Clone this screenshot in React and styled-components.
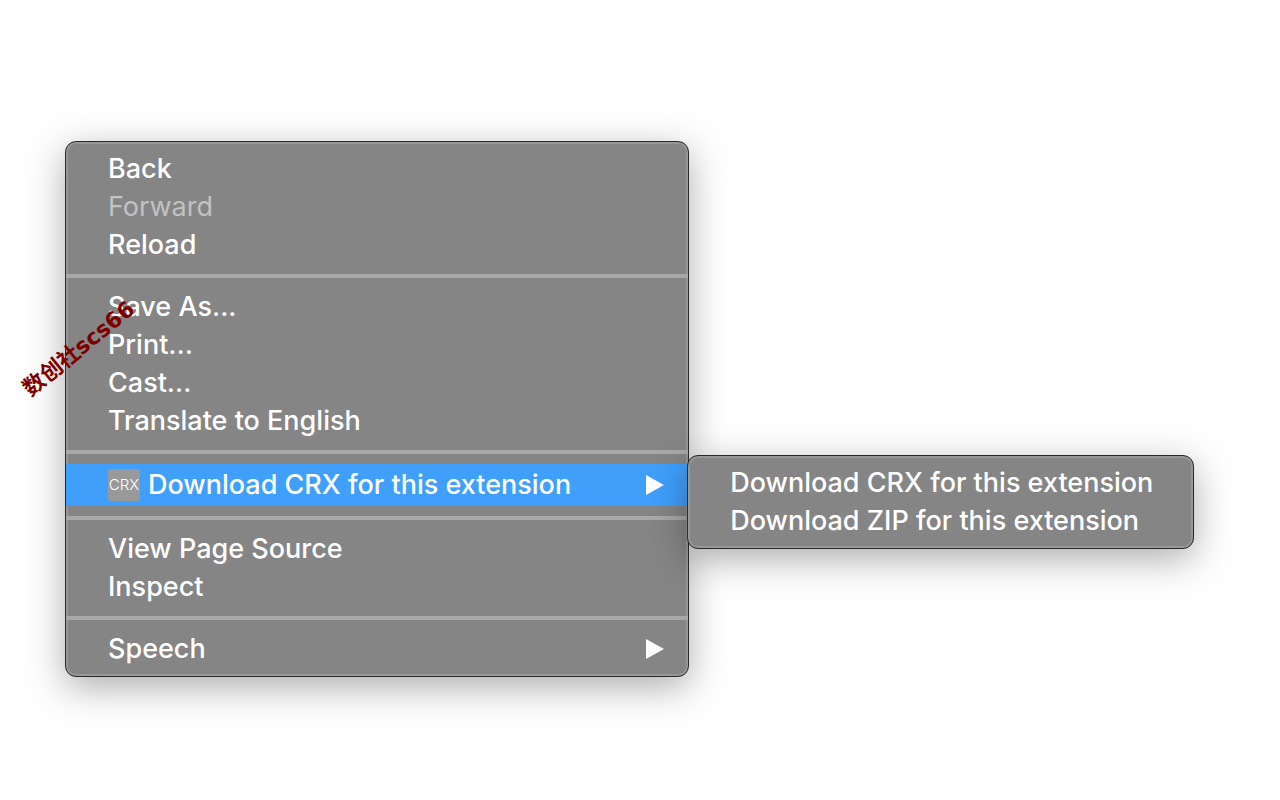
import React from "react";
import styled, { createGlobalStyle, css } from "styled-components";

const menuGroups = [
  [
    { id: "back", label: "Back" },
    { id: "forward", label: "Forward", disabled: true },
    { id: "reload", label: "Reload" },
  ],
  [
    { id: "save", label: "Save As..." },
    { id: "print", label: "Print..." },
    { id: "cast", label: "Cast..." },
    { id: "translate", label: "Translate to English" },
  ],
  [
    {
      id: "crx",
      label: "Download CRX for this extension",
      icon: "CRX",
      active: true,
      hasSubmenu: true,
      children: [
        { id: "download-crx", label: "Download CRX for this extension" },
        { id: "download-zip", label: "Download ZIP for this extension" },
      ],
    },
  ],
  [
    { id: "source", label: "View Page Source" },
    { id: "inspect", label: "Inspect" },
  ],
  [{ id: "speech", label: "Speech", hasSubmenu: true }],
];

const MenuItem = ({ item }) => (
  <Item role="none">
    <ItemButton
      type="button"
      role="menuitem"
      disabled={item.disabled}
      $active={item.active}
      aria-haspopup={item.hasSubmenu ? "menu" : undefined}
      aria-expanded={item.hasSubmenu ? Boolean(item.active) : undefined}
    >
      {item.icon && <ItemIcon aria-hidden="true">{item.icon}</ItemIcon>}
      <ItemLabel>{item.label}</ItemLabel>
      {item.hasSubmenu && (
        <Arrow viewBox="0 0 18 20" aria-hidden="true">
          <path d="M0 0L18 10L0 20Z" />
        </Arrow>
      )}
    </ItemButton>
    {item.children && (
      <Submenu role="menu" aria-label={item.label}>
        {item.children.map((child) => (
          <MenuItem key={child.id} item={child} />
        ))}
      </Submenu>
    )}
  </Item>
);

const App = () => {
  return (
    <>
      <GlobalStyle />
      <Page>
        <Menu role="menu" aria-label="Page menu">
          {menuGroups.map((group, index) => (
            <React.Fragment key={group[0].id}>
              {index > 0 && <Separator role="separator" />}
              {group.map((item) => (
                <MenuItem key={item.id} item={item} />
              ))}
            </React.Fragment>
          ))}
        </Menu>
        <Watermark>数创社scs66</Watermark>
      </Page>
    </>
  );
};

const GlobalStyle = createGlobalStyle`
  * {
    box-sizing: border-box;
  }

  body {
    margin: 0;
    background: #fefefe;
    font-family: Inter, "Liberation Sans", sans-serif;
  }
`;

const Page = styled.main`
  position: relative;
  display: flex;
  align-items: flex-start;
  min-height: 100vh;
  padding: 141px 65px;
`;

const Menu = styled.ul`
  flex: none;
  margin: 0;
  padding: 8px 0;
  list-style: none;
  border: 1px solid #2a2a2a;
  border-radius: 11px;
  background: #858585;
  box-shadow: inset 0 0 0 2px #979797, 0 10px 36px rgba(0, 0, 0, 0.32);
`;

const Submenu = styled(Menu)`
  position: absolute;
  top: -9px;
  left: calc(100% - 1px);
  z-index: 1;
`;

const Item = styled.li`
  position: relative;
`;

const ItemButton = styled.button`
  display: flex;
  align-items: center;
  width: 100%;
  height: 38px;
  padding: 0 40px 0 42px;
  border: 0;
  background: transparent;
  color: #fff;
  font-family: inherit;
  font-size: 27px;
  font-weight: 500;
  line-height: 36px;
  text-align: left;
  white-space: nowrap;

  &:disabled {
    color: #c2c2c2;
    font-weight: 400;
  }

  ${({ $active }) =>
    $active &&
    css`
      height: 42px;
      background: #3f9ffb;
    `}

  &:has(svg) {
    padding-right: 24px;
  }
`;

const ItemIcon = styled.span`
  flex: none;
  width: 32px;
  margin-right: 8px;
  border-radius: 3px;
  background: #999;
  color: #fff;
  font-size: 15px;
  font-weight: 300;
  line-height: 32px;
  text-align: center;
`;

const ItemLabel = styled.span`
  flex: 1;
`;

const Arrow = styled.svg`
  flex: none;
  width: 18px;
  height: 20px;
  margin-left: 75px;
  fill: #fff;
`;

const Separator = styled.li`
  height: 4px;
  margin: 10px 0;
  background: #a8a8a8;
`;

const Watermark = styled.span`
  position: absolute;
  top: 335px;
  left: 11px;
  z-index: 2;
  color: #7d0000;
  font-family: "DejaVu Sans", "Noto Sans CJK SC", sans-serif;
  font-size: 22px;
  font-weight: 700;
  line-height: 28px;
  white-space: nowrap;
  transform: rotate(-39deg);
  pointer-events: none;
`;

export default App;
